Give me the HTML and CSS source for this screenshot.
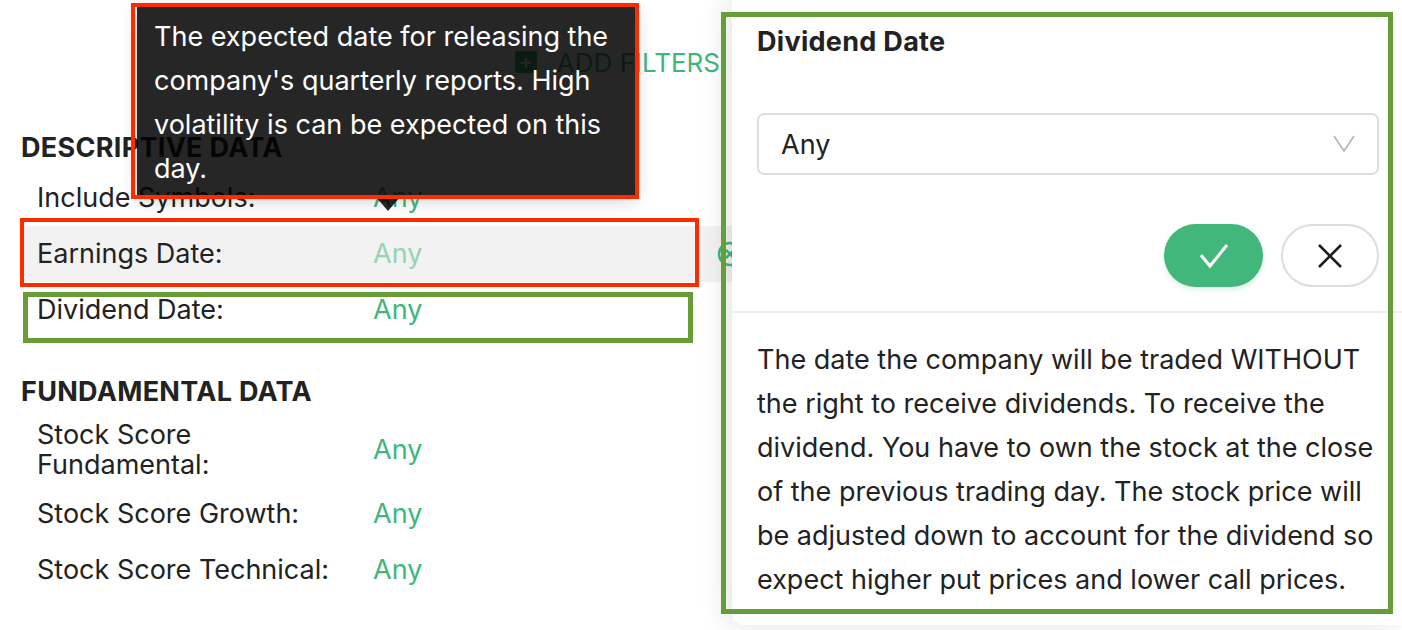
FILE: index.html
```html
<!DOCTYPE html>
<html lang="en">
	<head>
		<meta charset="UTF-8">
		<title>Screener Filters</title>
		<link rel="stylesheet" href="styles.css">
	</head>
	<body>
		<main class="filters">
			<div class="toolbar">
				<button class="addBtn" type="button"><span class="plusBox">+</span>ADD FILTERS</button>
			</div>

			<section class="group">
				<h2>DESCRIPTIVE DATA</h2>
				<div class="row">
					<span class="label">Include Symbols:</span>
					<span class="value">Any</span>
				</div>
				<div class="row active">
					<span class="label">Earnings Date:</span>
					<span class="value">Any</span>
					<svg class="clearIcon" width="26" height="26" viewBox="0 0 26 26">
						<circle cx="13" cy="13" r="11" fill="none" stroke="#3fb67a" stroke-width="2.5"/>
						<path d="M9 9 L17 17 M17 9 L9 17" stroke="#3fb67a" stroke-width="2.5"/>
					</svg>
				</div>
				<div class="row">
					<span class="label">Dividend Date:</span>
					<span class="value">Any</span>
				</div>
			</section>

			<section class="group second">
				<h2>FUNDAMENTAL DATA</h2>
				<div class="row">
					<span class="label">Stock Score Fundamental:</span>
					<span class="value">Any</span>
				</div>
				<div class="row">
					<span class="label">Stock Score Growth:</span>
					<span class="value">Any</span>
				</div>
				<div class="row">
					<span class="label">Stock Score Technical:</span>
					<span class="value">Any</span>
				</div>
			</section>
		</main>

		<!-- hover tooltip for the earnings row -->
		<div class="tooltip">
			The expected date for releasing the company's quarterly reports. High volatility is can be expected on this day.
		</div>

		<!-- edit drawer -->
		<aside class="panel">
			<div class="panelHead">
				<h3>Dividend Date</h3>
				<div class="select">
					<span>Any</span>
					<svg width="22" height="18" viewBox="0 0 22 18">
						<path d="M1 1 L11 16 L21 1" fill="none" stroke="#b5b5b5" stroke-width="1.6"/>
					</svg>
				</div>
				<div class="actions">
					<button class="okBtn" type="button">
						<svg width="30" height="26" viewBox="0 0 30 26">
							<path d="M2 12 L11 23 L28 2" fill="none" stroke="#fff" stroke-width="3"/>
						</svg>
					</button>
					<button class="cancelBtn" type="button">
						<svg width="24" height="24" viewBox="0 0 24 24">
							<path d="M1 1 L23 23 M23 1 L1 23" stroke="#1d1d1d" stroke-width="2.6"/>
						</svg>
					</button>
				</div>
			</div>
			<p class="info">
				The date the company will be traded WITHOUT the right to receive dividends. To receive the dividend. You have to own the stock at the close of the previous trading day. The stock price will be adjusted down to account for the dividend so expect higher put prices and lower call prices.
			</p>
		</aside>

		<!-- annotation outlines -->
		<div class="mark red tipMark"></div>
		<div class="mark red rowMark"></div>
		<div class="mark green listMark"></div>
		<div class="mark green panelMark"></div>
	</body>
</html>
```

FILE: styles.css
```css
body
{
	margin: 0;
	width: 1402px;
	height: 630px;
	overflow: hidden;
	position: relative;
	background: #FFFFFF;
	color: #222222;
	font-family: Inter, "Noto Sans", sans-serif;
}

.filters
{
	width: 760px;
}

.toolbar
{
	display: flex;
	justify-content: flex-end;
	height: 36px;
	padding: 44px 40px 0 0;
}

.addBtn
{
	display: flex;
	align-items: center;
	gap: 20px;
	padding: 0;
	border: 0;
	background: none;
	font-family: inherit;
	font-size: 26px;
	color: #3FB67A;
}

.plusBox
{
	width: 22px;
	height: 22px;
	border-radius: 2px;
	background: #42B77B;
	color: #FFFFFF;
	font-size: 22px;
	line-height: 21px;
	text-align: center;
}

.group
{
	padding-left: 21px;
	margin-top: 53px;
}

.group.second
{
	margin-top: 39px;
}

.group h2
{
	margin: 0 0 7px;
	font-size: 27px;
	line-height: 30px;
	font-weight: 700;
	letter-spacing: 0.3px;
}

.row
{
	display: flex;
	align-items: center;
	box-sizing: border-box;
	min-height: 56px;
	padding: 6px 17px 6px 16px;
	font-size: 27px;
	line-height: 30px;
}

.row.active
{
	background: #F2F2F2;
}

.label
{
	width: 310px;
	margin-right: 26px;
}

.value
{
	color: #3FB67A;
}

.row.active .value
{
	color: #93D6B1;
}

.clearIcon
{
	margin-left: auto;
}

.tooltip
{
	position: absolute;
	left: 137px;
	top: 5px;
	width: 499px;
	box-sizing: border-box;
	padding: 10px 17px 6px;
	border-radius: 3px;
	background: rgba(0, 0, 0, 0.85);
	color: #FFFFFF;
	font-size: 27px;
	line-height: 44px;
	box-shadow: 0 4px 18px rgba(0, 0, 0, 0.18);
}

.tooltip::after
{
	content: "";
	position: absolute;
	left: 239px;
	bottom: -14px;
	border-left: 12px solid transparent;
	border-right: 12px solid transparent;
	border-top: 14px solid rgba(0, 0, 0, 0.85);
}

.panel
{
	position: absolute;
	top: 0;
	right: 0;
	width: 670px;
	height: 625px;
	background: #FFFFFF;
	border-radius: 0 0 0 12px;
	box-shadow: -6px 0 28px rgba(0, 0, 0, 0.11);
}

.panelHead
{
	padding: 27px 23px 24px 25px;
}

.panelHead h3
{
	margin: 0;
	font-size: 27px;
	line-height: 30px;
	font-weight: 700;
	letter-spacing: 0.3px;
}

.select
{
	display: flex;
	align-items: center;
	justify-content: space-between;
	box-sizing: border-box;
	height: 62px;
	margin-top: 56px;
	padding: 0 22px;
	border: 2px solid #DDDDDD;
	border-radius: 7px;
	font-size: 27px;
}

.actions
{
	display: flex;
	justify-content: flex-end;
	gap: 18px;
	margin-top: 49px;
}

.okBtn, .cancelBtn
{
	display: flex;
	align-items: center;
	justify-content: center;
	box-sizing: border-box;
	height: 63px;
	border-radius: 32px;
}

.okBtn
{
	width: 99px;
	border: 0;
	background: #42B77B;
	box-shadow: 0 3px 5px rgba(66, 183, 123, 0.18);
}

.cancelBtn
{
	width: 98px;
	border: 2px solid #DDDDDD;
	background: #FFFFFF;
}

.info
{
	margin: 0;
	padding: 25px 20px 23px 25px;
	border-top: 2px solid #EEEEEE;
	font-size: 27px;
	line-height: 44px;
}

.mark
{
	position: absolute;
	box-sizing: border-box;
}

.mark.red
{
	border: 4px solid #FE2B00;
}

.mark.green
{
	border: 5px solid #679D37;
}

.tipMark
{
	left: 131px;
	top: 3px;
	width: 508px;
	height: 196px;
}

.rowMark
{
	left: 20px;
	top: 218px;
	width: 679px;
	height: 69px;
}

.listMark
{
	left: 23px;
	top: 292px;
	width: 670px;
	height: 51px;
	border-width: 4px;
}

.panelMark
{
	left: 721px;
	top: 12px;
	width: 672px;
	height: 602px;
}
```
